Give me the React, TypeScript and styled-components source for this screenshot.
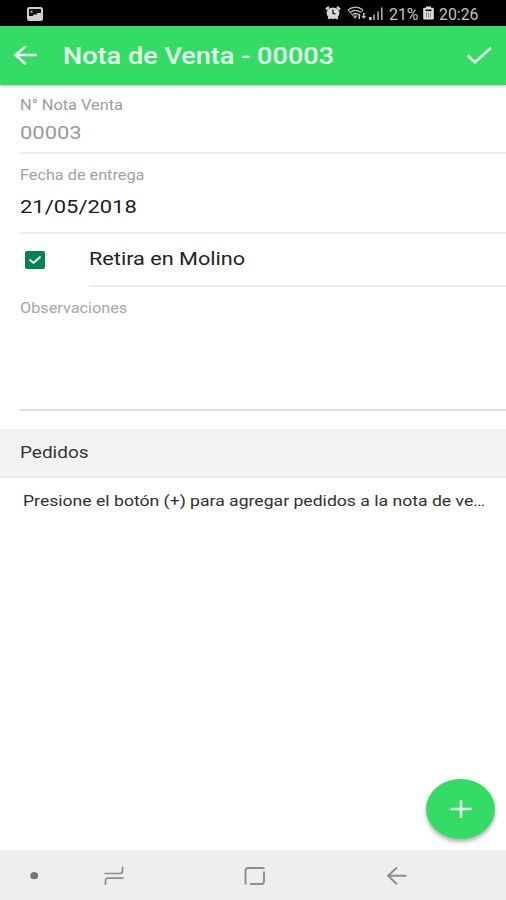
import React from "react";
import styled, { createGlobalStyle } from "styled-components";

const GlobalStyle = createGlobalStyle`
  * { box-sizing: border-box; }
  body { margin: 0; background: #fff; font-family: Roboto, "Liberation Sans", sans-serif; }
`;

const Screen = styled.div`
  position: relative;
  display: flex;
  flex-direction: column;
  width: 506px;
  height: 900px;
  overflow: hidden;
  background: #fff;
`;

const Label = styled.span<{ $size: number; $color: string; $stretch?: number; $weight?: number }>`
  display: block;
  width: max-content;
  margin: 0;
  white-space: nowrap;
  line-height: 1.2;
  font-size: ${(p) => p.$size}px;
  font-weight: ${(p) => p.$weight ?? 400};
  color: ${(p) => p.$color};
  transform: scaleX(${(p) => p.$stretch ?? 1.155});
  transform-origin: left center;
`;

const StatusBar = styled.div`
  display: flex;
  flex: none;
  align-items: center;
  height: 26px;
  padding: 2px 0 0 27px;
  background: #000;
`;

const StatusIcons = styled.div`
  display: flex;
  align-items: center;
  margin-left: 282px;
`;

const StatusItem = styled.div<{ $width?: number; $top?: number }>`
  width: ${(p) => (p.$width ? `${p.$width}px` : "auto")};
  padding-top: ${(p) => p.$top ?? 0}px;
`;

const AppBar = styled.header`
  display: flex;
  flex: none;
  align-items: center;
  height: 59px;
  padding: 0 14px 0 13px;
  background: #34dc65;
  box-shadow: 0 1px 3px rgba(0, 0, 0, 0.28);
  z-index: 1;
`;

const Title = styled.div`
  flex: 1;
  margin-left: 26px;
  padding-top: 2px;
`;

const Field = styled.section<{ $height: number; $top: number; $gap?: number; $line?: string }>`
  display: flex;
  flex: none;
  flex-direction: column;
  gap: ${(p) => p.$gap ?? 0}px;
  height: ${(p) => p.$height}px;
  margin-left: 20px;
  padding-top: ${(p) => p.$top}px;
  border-bottom: 2px solid ${(p) => p.$line ?? "#ededed"};
`;

const CheckRow = styled.label`
  display: flex;
  flex: none;
  height: 53px;
  padding-left: 25px;
`;

const CheckBox = styled.span`
  display: flex;
  width: 20px;
  height: 18px;
  margin-top: 17px;
  border-radius: 2px;
  background: #058255;
`;

const CheckText = styled.div`
  flex: 1;
  margin-left: 44px;
  padding-top: 14px;
  border-bottom: 2px solid #ededed;
`;

const SectionHeader = styled.h2`
  flex: none;
  height: 49px;
  margin: 18px 0 0;
  padding: 14px 0 0 20px;
  background: #f3f3f3;
  border-bottom: 2px solid #ebebeb;
`;

const Hint = styled.div`
  flex: 1;
  padding: 14px 0 0 23px;
`;

const AddButton = styled.button`
  position: absolute;
  left: 426px;
  top: 779px;
  display: flex;
  align-items: center;
  justify-content: center;
  width: 69px;
  height: 60px;
  padding: 0;
  border: 0;
  border-radius: 50%;
  background: #34dc65;
  box-shadow: 0 3px 4px rgba(0, 0, 0, 0.3);
`;

const NavBar = styled.nav`
  display: flex;
  flex: none;
  align-items: center;
  height: 50px;
  padding: 1px 0 0 29px;
  background: #eeeeee;
`;

const NavSlot = styled.div<{ $width: number }>`
  display: flex;
  width: ${(p) => p.$width}px;
`;

const PictureIcon = () => (
  <svg width="16" height="14" viewBox="0 0 16 14">
    <rect x="1" y="1" width="14" height="12" rx="1.5" fill="#111" stroke="#cfcfcf" strokeWidth="2" />
    <path d="M2 12V9h3.500L7 7.500h3V6h4v6z" fill="#cfcfcf" />
    <path d="M3.500 3.500h2v2.500h-2z" fill="#8a8a8a" />
  </svg>
);

const AlarmIcon = () => (
  <svg width="16" height="14" viewBox="0 0 16 14">
    <path d="M1 3.400 4 1M12 1l3 2.400M3.400 12.800l1.400-1.600M12.600 12.800l-1.400-1.600" stroke="#d8d8d8" strokeWidth="2.400" fill="none" />
    <ellipse cx="8" cy="7.200" rx="6.400" ry="5.800" fill="#d8d8d8" />
    <path d="M8 3.800v3.700l2.500.3" stroke="#111" strokeWidth="1.300" fill="none" />
  </svg>
);

const WifiIcon = () => (
  <svg width="21" height="14" viewBox="0 0 21 14">
    <g fill="none" stroke="#c4c4c4" strokeWidth="1.300">
      <path d="M1 4Q8.500-1.800 16 4" />
      <path d="M3.400 6.300Q8.500 2.400 13.600 6.300" />
      <path d="M5.600 8.600Q8.500 6.400 11.400 8.600" />
      <path d="M1 4 8.500 12.500M16 4 13.800 6.600" strokeWidth="1" />
    </g>
    <path d="M7 9.500h3.200l-1.700 3zM10.800 9.500l1.500-2 1.500 2h-.8V13h-1.500V9.500zM16 7h1.500v3h1.700l-2.400 2.700L14.300 10H16z" fill="#c4c4c4" />
  </svg>
);

const SignalIcon = () => (
  <svg width="15" height="13" viewBox="0 0 15 13">
    <path d="M0 10h2.500v3H0z" fill="#d0d0d0" />
    <path d="M4 7.500h2V13H4zM8 4.500h2V13H8z" fill="#888" />
    <path d="M12 .5h1.600V13H12z" fill="#aaa" />
  </svg>
);

const BatteryIcon = () => (
  <svg width="11" height="14" viewBox="0 0 11 14">
    <path d="M3 .5h5v1.300h2q.8 0 .8.800v10q0 .900-.8.900H1q-.8 0-.8-.9v-10q0-.8.8-.8h2z" fill="#dcdcdc" />
    <path d="M2.500 3.500h6v1.600h-6z" fill="#111" />
    <path d="M3.500 6.500v5M5.500 6.500v5M7.500 6.500v5" stroke="#777" strokeWidth=".8" />
  </svg>
);

const BackIcon = () => (
  <svg width="24" height="20" viewBox="0 0 24 20" fill="none" stroke="#f4fff7" strokeWidth="2.400" strokeLinecap="round">
    <path d="M2.500 9h20.500M12 .9 2.500 9l9.500 8.500" />
  </svg>
);

const DoneIcon = () => (
  <svg width="26" height="18" viewBox="0 0 26 18" fill="none" stroke="#e8ffee" strokeWidth="2.600">
    <path d="M1.500 8.500 9 15.200 25 .9" />
  </svg>
);

export default function App() {
  return (
    <>
      <GlobalStyle />
      <Screen>
        <StatusBar>
          <PictureIcon />
          <StatusIcons>
            <StatusItem $width={22} $top={1}><AlarmIcon /></StatusItem>
            <StatusItem $width={22} $top={1}><WifiIcon /></StatusItem>
            <StatusItem $width={20}><SignalIcon /></StatusItem>
            <StatusItem $width={34} $top={1}>
              <Label $size={16} $color="#c4c4c4" $stretch={0.99}>21%</Label>
            </StatusItem>
            <StatusItem $width={16} $top={1}><BatteryIcon /></StatusItem>
            <StatusItem $top={1}>
              <Label $size={16} $color="#c4c4c4" $stretch={0.99}>20:26</Label>
            </StatusItem>
          </StatusIcons>
        </StatusBar>
        <AppBar>
          <BackIcon />
          <Title>
            <Label as="h1" $size={23} $weight={500} $stretch={1.177} $color="#e8ffee">Nota de Venta - 00003</Label>
          </Title>
          <DoneIcon />
        </AppBar>
        <Field $height={69} $top={12} $gap={8}>
          <Label $size={14} $stretch={1.165} $color="#9c9c9c">N° Nota Venta</Label>
          <Label $size={19} $color="#9a9a9a">00003</Label>
        </Field>
        <Field $height={80} $top={13} $gap={12}>
          <Label $size={14} $stretch={1.16} $color="#a2a2a2">Fecha de entrega</Label>
          <Label $size={19} $color="#1c1c1c">21/05/2018</Label>
        </Field>
        <CheckRow>
          <CheckBox>
            <svg width="20" height="18" viewBox="0 0 20 18" fill="none" stroke="#e8fff5" strokeWidth="2">
              <path d="M4.500 8.500 8.500 12 15.500 5.500" />
            </svg>
          </CheckBox>
          <CheckText>
            <Label $size={19} $stretch={1.14} $color="#222">Retira en Molino</Label>
          </CheckText>
        </CheckRow>
        <Field $height={124} $top={13} $line="#dedede">
          <Label $size={14} $stretch={1.16} $color="#a6a6a6">Observaciones</Label>
        </Field>
        <SectionHeader>
          <Label $size={16} $stretch={1.185} $color="#333">Pedidos</Label>
        </SectionHeader>
        <Hint>
          <Label $size={15} $stretch={1.173} $color="#303030">Presione el botón (+) para agregar pedidos a la nota de ve…</Label>
        </Hint>
        <AddButton aria-label="Agregar pedido">
          <svg width="22" height="20" viewBox="0 0 22 20" stroke="#e8ffee" strokeWidth="2.500">
            <path d="M0.500 10h21M11 1v18" />
          </svg>
        </AddButton>
        <NavBar>
          <NavSlot $width={75}>
            <svg width="10" height="8" viewBox="0 0 10 8"><ellipse cx="5.200" cy="3.700" rx="3.900" ry="3.600" fill="#757575" /></svg>
          </NavSlot>
          <NavSlot $width={140}>
            <svg width="21" height="20" viewBox="0 0 21 20" fill="none" stroke="#8d8d8d" strokeWidth="1.700">
              <path d="M.5 7.500H16q2.500 0 2.500-2.500V.5M19.500 12.200H4q-2.500 0-2.500 2.500V19" />
            </svg>
          </NavSlot>
          <NavSlot $width={142}>
            <svg width="22" height="20" viewBox="0 0 22 20" fill="none" stroke="#8d8d8d" strokeWidth="1.900">
              <path d="M20.500 2H4Q1.500 2 1.500 4.500V18.500M6 18h11.500q2.500 0 2.500-2.500V5.500" />
            </svg>
          </NavSlot>
          <svg width="21" height="20" viewBox="0 0 21 20" fill="none" stroke="#8d8d8d" strokeWidth="1.900">
            <path d="M20.500 9.800H2M11 1.500 2 9.800l9 8.500" />
          </svg>
        </NavBar>
      </Screen>
    </>
  );
}
